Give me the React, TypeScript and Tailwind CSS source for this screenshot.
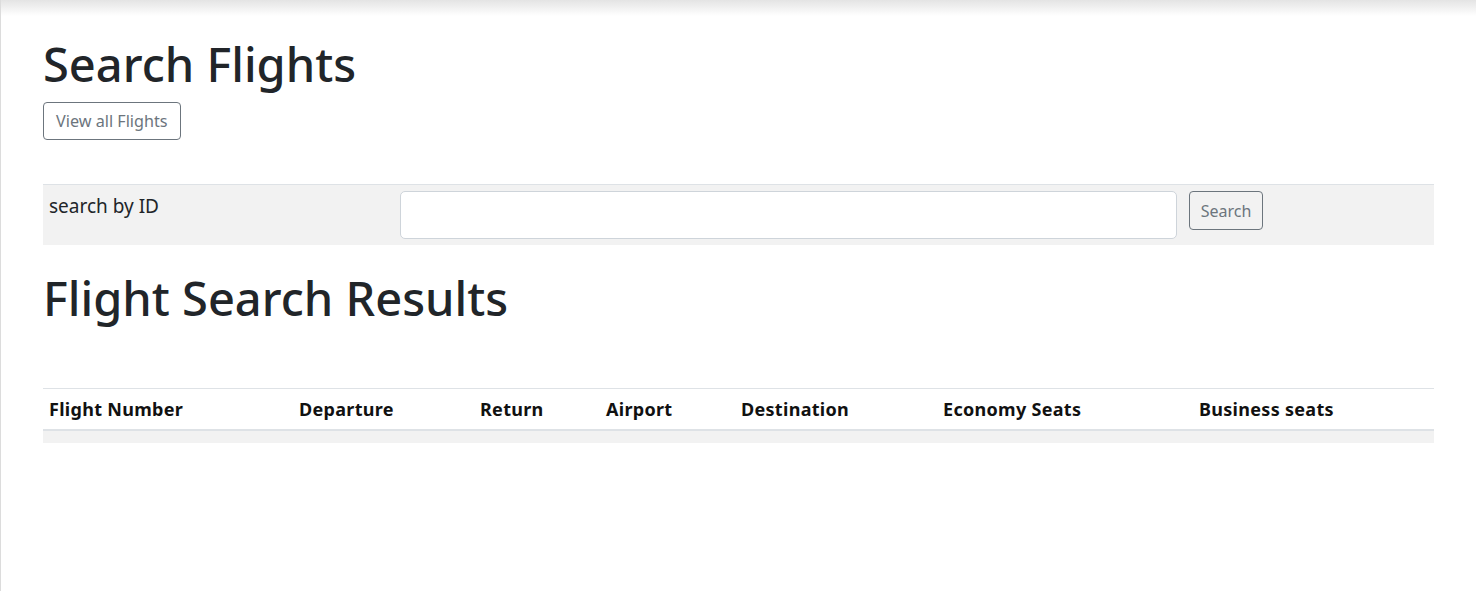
import React from "react";

const cols = [
  { label: "Flight Number", w: "w-[250px]" },
  { label: "Departure", w: "w-[181px]" },
  { label: "Return", w: "w-[126px]" },
  { label: "Airport", w: "w-[135px]" },
  { label: "Destination", w: "w-[202px]" },
  { label: "Economy Seats", w: "w-[256px]" },
  { label: "Business seats", w: "w-[241px]" },
];

export default function App() {
  return (
    <div
      className="min-h-[591px] bg-white border-l border-[#dcdcdc] text-[#212529]"
      style={{ fontFamily: '"Noto Sans", "Open Sans", sans-serif' }}
    >
      <div className="h-[16px] bg-gradient-to-b from-[#e4e4e4] to-white" />
      <div className="pl-[42px] pr-[42px]">
        <h1 className="text-[47px] leading-[58px] font-medium mt-[19px]">Search Flights</h1>
        <button className="mt-[9px] h-[38px] px-[12px] border border-[#6c757d] rounded-[4px] text-[16.2px] text-[#6c757d] leading-none">
          View all Flights
        </button>
        <div className="mt-[44px] border-t border-[#dee2e6] bg-[#f2f2f2] h-[61px] flex">
          <div className="w-[351px] px-[6px] pt-[8px] text-[19px] leading-[26px]">search by ID</div>
          <div className="w-[789px] px-[6px] pt-[6px]">
            <input className="w-full h-[48px] bg-white border border-[#ced4da] rounded-[5px] outline-none" />
          </div>
          <div className="px-[6px] pt-[6px]">
            <button className="h-[39px] w-[74px] border border-[#6c757d] rounded-[4px] text-[16px] text-[#6c757d] leading-none">
              Search
            </button>
          </div>
        </div>
        <h1 className="text-[47px] leading-[58px] font-medium mt-[24px]">Flight Search Results</h1>
        <div className="mt-[61px] border-t border-[#dee2e6]">
          <div className="flex h-[42px] items-center border-b-2 border-[#dee2e6]">
            {cols.map((c) => (
              <div key={c.label} className={`${c.w} px-[6px] font-bold text-[18px] tracking-[0.3px] text-[#111]`}>
                {c.label}
              </div>
            ))}
          </div>
          <div className="h-[12px] bg-[#f2f2f2]" />
        </div>
      </div>
    </div>
  );
}
